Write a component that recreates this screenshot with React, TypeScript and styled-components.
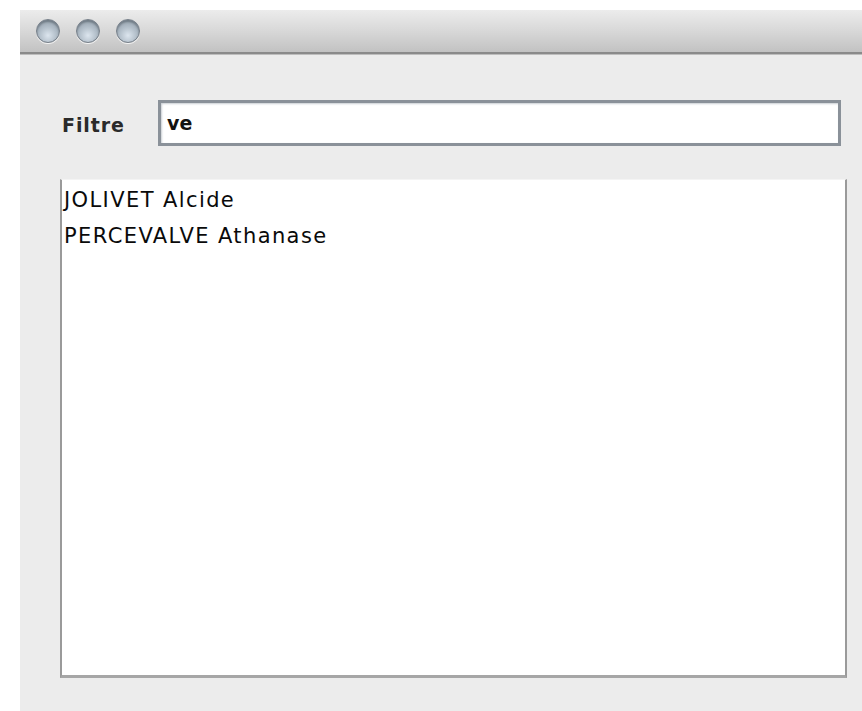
import React from 'react'
import styled, {createGlobalStyle} from 'styled-components'

const people = ['JOLIVET Alcide', 'PERCEVALVE Athanase']

export default function App(): JSX.Element {
  return (
    <>
      <GlobalStyle />
      <Window>
        <TitleBar>
          <Light />
          <Light />
          <Light />
        </TitleBar>

        <Content>
          <FilterRow>
            <Label>Filtre</Label>
            <FilterInput>ve</FilterInput>
          </FilterRow>

          <List>
            {people.map((name) => (
              <ListItem key={name}>{name}</ListItem>
            ))}
          </List>
        </Content>
      </Window>
    </>
  )
}

const GlobalStyle = createGlobalStyle`
  html, body {
    margin: 0;
    background: #fff;
  }
  body {
    font-family: 'DejaVu Sans', 'Liberation Sans', sans-serif;
    color: #111;
  }
`

const Window = styled.div`
  margin: 10px 0 0 20px;
  width: 842px;
  height: 701px;
  background: #ececec;
  display: flex;
  flex-direction: column;
`

const TitleBar = styled.div`
  height: 42px;
  display: flex;
  align-items: center;
  gap: 16px;
  padding: 0 0 0 16px;
  background: linear-gradient(#ececec 0%, #dadada 45%, #c2c2c2 100%);
  border-bottom: 2px solid #8a8a8a;
  box-shadow: 0 1px 0 #bdbdbd;
`

const Light = styled.span`
  width: 24px;
  height: 24px;
  border-radius: 50%;
  box-sizing: border-box;
  border: 1px solid #77808a;
  background: radial-gradient(
    circle at 50% 70%,
    #dce5ee 0%,
    #b2bec9 45%,
    #8894a0 100%
  );
  box-shadow: inset 0 2px 2px rgba(60, 70, 80, 0.45), 0 1px 0 #f4f4f4;
`

const Content = styled.div`
  flex: 1;
  display: flex;
  flex-direction: column;
  padding: 46px 15px 33px 40px;
  gap: 33px;
`

const FilterRow = styled.div`
  display: flex;
  align-items: center;
  padding-right: 6px;
`

const Label = styled.span`
  width: 96px;
  padding: 3px 0 0 2px;
  font-size: 19px;
  font-weight: bold;
  letter-spacing: 0.9px;
  color: #2a2a2a;
`

const FilterInput = styled.div`
  flex: 1;
  height: 46px;
  box-sizing: border-box;
  display: flex;
  align-items: center;
  padding-left: 6px;
  background: #fff;
  border: 3px solid #8a9199;
  box-shadow: inset 1px 1px 2px #c9ced3;
  font-size: 19px;
  font-weight: bold;
`

const List = styled.div`
  flex: 1;
  background: #fff;
  border-left: 2px solid #9a9a9a;
  border-right: 2px solid #9a9a9a;
  border-bottom: 3px solid #a6a6a6;
  border-top: 1px solid #f4f4f4;
  padding: 2px 2px;
  display: flex;
  flex-direction: column;
`

const ListItem = styled.div`
  height: 36px;
  display: flex;
  align-items: center;
  font-size: 21px;
  letter-spacing: 1.4px;
  color: #0a0a0a;
`
